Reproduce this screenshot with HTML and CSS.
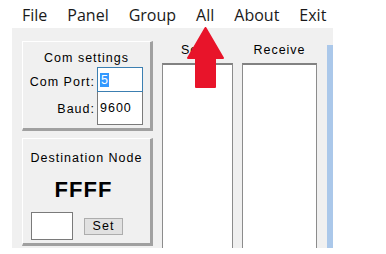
FILE: index.html
```html
<!DOCTYPE html>
<html lang="en">
<head>
    <meta charset="UTF-8">
    <title>Node Panel</title>
    <link rel="stylesheet" href="styles.css">
</head>
<body>
    <div class="menubar">
        <span>File</span>
        <span>Panel</span>
        <span>Group</span>
        <span>All</span>
        <span>About</span>
        <span>Exit</span>
    </div>
    <div class="panel">
        <div class="leftcol">
            <div class="group com">
                <p class="title">Com settings</p>
                <div class="row r1">
                    <label>Com Port:</label>
                    <div class="field focus"><span class="sel">5</span></div>
                </div>
                <div class="row r2">
                    <label>Baud:</label>
                    <div class="field tall">9600</div>
                </div>
            </div>
            <div class="group dest">
                <p class="title">Destination Node</p>
                <p class="node">FFFF</p>
                <div class="setrow">
                    <div class="nodebox"></div>
                    <button type="button" class="setbtn">Set</button>
                </div>
            </div>
        </div>
        <div class="listcol send">
            <p class="listlabel">Send</p>
            <div class="list"></div>
        </div>
        <div class="listcol recv">
            <p class="listlabel">Receive</p>
            <div class="list"></div>
        </div>
        <div class="bluebar"></div>
    </div>
    <svg class="arrow" width="37" height="62" viewBox="0 0 37 62">
        <polygon points="18.5,1 1,31 9,31 9,60 28,60 28,31 36,31" fill="#e8142a" stroke="#e8142a" stroke-width="2" stroke-linejoin="round"/>
    </svg>
</body>
</html>
```

FILE: styles.css
```css
body {margin: 0; background: #fff; position: relative; width: 386px; height: 254px; overflow: hidden;}
p {margin: 0;}

.menubar {display: flex; gap: 20px; height: 28px; padding-left: 22px; font-family: "Open Sans", sans-serif; font-size: 16px; line-height: 30px; color: #1a1a1a;}

.panel {display: flex; width: 311px; height: 207px; margin-left: 12px; padding: 13px 0 0 10px; background: #f0f0f0; overflow: hidden; font-family: "Liberation Sans", Arial, sans-serif; font-size: 12.5px; letter-spacing: 1px; color: #000;}

.leftcol {display: flex; flex-direction: column; gap: 7px; width: 131px;}
.group {background: #f0f0f0; border-top: 1px solid #fff; border-left: 1px solid #fff; border-right: 3px solid #a0a0a0; border-bottom: 3px solid #a0a0a0; box-sizing: border-box;}
.com {height: 90px; padding-top: 8px;}
.dest {height: 108px; padding-top: 11px;}
.title {text-align: center; line-height: 16px;}

.row {display: flex; align-items: center;}
.row label {width: 72px; text-align: right; margin-right: 2px;}
.r1 {margin-top: 1px;}
.r1 label {padding-top: 4px;}
.field {width: 46px; height: 25px; box-sizing: border-box; background: #fff; border: 1px solid #7a7a7a; padding: 5px 0 0 2px; line-height: 14px;}
.field.focus {border-color: #3c7fb1;}
.field.tall {height: 33px; border-top: none; padding-top: 9px;}
.sel {background: #3399ff; color: #fff; padding: 0 1px 0 1px; letter-spacing: 0;}

.node {text-align: center; font-size: 22px; font-weight: bold; line-height: 26px; margin-top: 11px; letter-spacing: 1px; padding-right: 6px;}
.setrow {display: flex; align-items: center; margin-top: 9px; padding-left: 8px;}
.nodebox {width: 42px; height: 28px; box-sizing: border-box; background: #fff; border: 1px solid #7a7a7a;}
.setbtn {width: 39px; height: 17px; margin-left: 11px; padding: 0; background: #e1e1e1; border: 1px solid #adadad; font-family: "Liberation Sans", Arial, sans-serif; font-size: 12.5px; letter-spacing: 1px; line-height: 14px; color: #000;}

.listcol {display: flex; flex-direction: column; margin-left: 9px;}
.send {width: 71px;}
.recv {width: 75px;}
.listlabel {height: 22px; line-height: 18px; text-align: center;}
.list {flex: 1; background: #fff; border: 1px solid #8c8c8c; border-top: 2px solid #828282; border-bottom: none;}

.bluebar {width: 6px; margin: 4px 0 0 10px; background: #abc8ea;}

.arrow {position: absolute; left: 187px; top: 27px;}
```
